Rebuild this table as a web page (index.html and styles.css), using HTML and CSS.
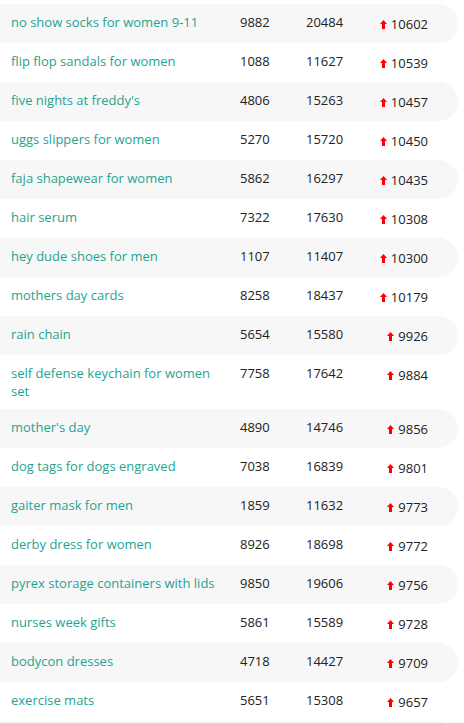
FILE: index.html
```html
<!DOCTYPE html>
<html>
<head>
<meta charset="utf-8">
<link rel="stylesheet" href="styles.css">
</head>
<body>
<div class="table">
  <div class="row"><div class="name">no show socks for women 9-11</div><div class="num">9882</div><div class="num">20484</div><div class="change"><svg class="up" viewBox="0 0 7 9"><path d="M3.5 0 L7 4 L5 4 L5 9 L2 9 L2 4 L0 4 Z"/></svg>10602</div></div>
  <div class="row"><div class="name">flip flop sandals for women</div><div class="num">1088</div><div class="num">11627</div><div class="change"><svg class="up" viewBox="0 0 7 9"><path d="M3.5 0 L7 4 L5 4 L5 9 L2 9 L2 4 L0 4 Z"/></svg>10539</div></div>
  <div class="row"><div class="name">five nights at freddy's</div><div class="num">4806</div><div class="num">15263</div><div class="change"><svg class="up" viewBox="0 0 7 9"><path d="M3.5 0 L7 4 L5 4 L5 9 L2 9 L2 4 L0 4 Z"/></svg>10457</div></div>
  <div class="row"><div class="name">uggs slippers for women</div><div class="num">5270</div><div class="num">15720</div><div class="change"><svg class="up" viewBox="0 0 7 9"><path d="M3.5 0 L7 4 L5 4 L5 9 L2 9 L2 4 L0 4 Z"/></svg>10450</div></div>
  <div class="row"><div class="name">faja shapewear for women</div><div class="num">5862</div><div class="num">16297</div><div class="change"><svg class="up" viewBox="0 0 7 9"><path d="M3.5 0 L7 4 L5 4 L5 9 L2 9 L2 4 L0 4 Z"/></svg>10435</div></div>
  <div class="row"><div class="name">hair serum</div><div class="num">7322</div><div class="num">17630</div><div class="change"><svg class="up" viewBox="0 0 7 9"><path d="M3.5 0 L7 4 L5 4 L5 9 L2 9 L2 4 L0 4 Z"/></svg>10308</div></div>
  <div class="row"><div class="name">hey dude shoes for men</div><div class="num">1107</div><div class="num">11407</div><div class="change"><svg class="up" viewBox="0 0 7 9"><path d="M3.5 0 L7 4 L5 4 L5 9 L2 9 L2 4 L0 4 Z"/></svg>10300</div></div>
  <div class="row"><div class="name">mothers day cards</div><div class="num">8258</div><div class="num">18437</div><div class="change"><svg class="up" viewBox="0 0 7 9"><path d="M3.5 0 L7 4 L5 4 L5 9 L2 9 L2 4 L0 4 Z"/></svg>10179</div></div>
  <div class="row"><div class="name">rain chain</div><div class="num">5654</div><div class="num">15580</div><div class="change"><svg class="up" viewBox="0 0 7 9"><path d="M3.5 0 L7 4 L5 4 L5 9 L2 9 L2 4 L0 4 Z"/></svg>9926</div></div>
  <div class="row"><div class="name">self defense keychain for women set</div><div class="num">7758</div><div class="num">17642</div><div class="change"><svg class="up" viewBox="0 0 7 9"><path d="M3.5 0 L7 4 L5 4 L5 9 L2 9 L2 4 L0 4 Z"/></svg>9884</div></div>
  <div class="row"><div class="name">mother's day</div><div class="num">4890</div><div class="num">14746</div><div class="change"><svg class="up" viewBox="0 0 7 9"><path d="M3.5 0 L7 4 L5 4 L5 9 L2 9 L2 4 L0 4 Z"/></svg>9856</div></div>
  <div class="row"><div class="name">dog tags for dogs engraved</div><div class="num">7038</div><div class="num">16839</div><div class="change"><svg class="up" viewBox="0 0 7 9"><path d="M3.5 0 L7 4 L5 4 L5 9 L2 9 L2 4 L0 4 Z"/></svg>9801</div></div>
  <div class="row"><div class="name">gaiter mask for men</div><div class="num">1859</div><div class="num">11632</div><div class="change"><svg class="up" viewBox="0 0 7 9"><path d="M3.5 0 L7 4 L5 4 L5 9 L2 9 L2 4 L0 4 Z"/></svg>9773</div></div>
  <div class="row"><div class="name">derby dress for women</div><div class="num">8926</div><div class="num">18698</div><div class="change"><svg class="up" viewBox="0 0 7 9"><path d="M3.5 0 L7 4 L5 4 L5 9 L2 9 L2 4 L0 4 Z"/></svg>9772</div></div>
  <div class="row"><div class="name">pyrex storage containers with lids</div><div class="num">9850</div><div class="num">19606</div><div class="change"><svg class="up" viewBox="0 0 7 9"><path d="M3.5 0 L7 4 L5 4 L5 9 L2 9 L2 4 L0 4 Z"/></svg>9756</div></div>
  <div class="row"><div class="name">nurses week gifts</div><div class="num">5861</div><div class="num">15589</div><div class="change"><svg class="up" viewBox="0 0 7 9"><path d="M3.5 0 L7 4 L5 4 L5 9 L2 9 L2 4 L0 4 Z"/></svg>9728</div></div>
  <div class="row"><div class="name">bodycon dresses</div><div class="num">4718</div><div class="num">14427</div><div class="change"><svg class="up" viewBox="0 0 7 9"><path d="M3.5 0 L7 4 L5 4 L5 9 L2 9 L2 4 L0 4 Z"/></svg>9709</div></div>
  <div class="row"><div class="name">exercise mats</div><div class="num">5651</div><div class="num">15308</div><div class="change"><svg class="up" viewBox="0 0 7 9"><path d="M3.5 0 L7 4 L5 4 L5 9 L2 9 L2 4 L0 4 Z"/></svg>9657</div></div>
  <div class="row"><div class="name">&nbsp;</div><div class="num"></div><div class="num"></div><div class="change"></div></div>
</div>
</body>
</html>
```

FILE: styles.css
```css
html, body {
  margin: 0;
  padding: 0;
  background: #ffffff;
}
body {
  font-family: "Open Sans", "Noto Sans", sans-serif;
  font-size: 13px;
  color: #222222;
  overflow: hidden;
  height: 723px;
}
.table {
  padding-top: 4px;
  width: 458px;
}
.row {
  display: grid;
  grid-template-columns: 229px 66px 66px 56px;
  min-height: 39px;
  box-sizing: border-box;
  padding: 9px 0 9px 11px;
  line-height: 18px;
  align-items: start;
}
.row:nth-child(odd) {
  background: #f7f7f7;
  border-radius: 0 20px 20px 0;
}
.name {
  color: #1fa393;
  padding-right: 14px;
}
.num {
  color: #222222;
}
.change {
  display: flex;
  justify-content: flex-end;
  align-items: center;
  gap: 4px;
  padding-top: 2px;
  color: #222222;
}
.up {
  width: 7px;
  height: 9px;
  fill: #ff0000;
  flex: none;
}
```
